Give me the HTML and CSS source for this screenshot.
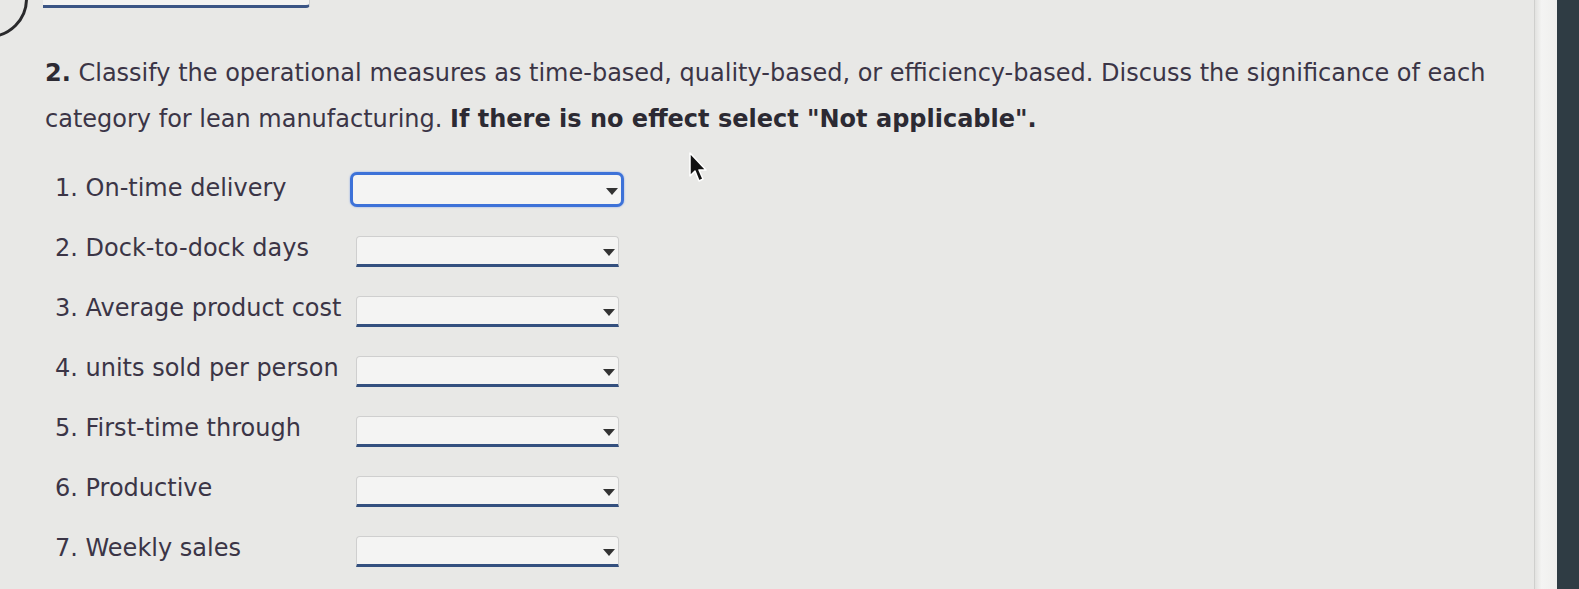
FILE: index.html
```html
<!DOCTYPE html>
<html>
<head>
<meta charset="utf-8">
<link rel="stylesheet" href="styles.css">
</head>
<body>
<div class="screen">
  <div class="page">
    <div class="topbar">
      <div class="ring"></div>
      <div class="prev-select"></div>
    </div>
    <p class="question"><b>2.</b> Classify the operational measures as time-based, quality-based, or efficiency-based. Discuss the significance of each category for lean manufacturing. <b>If there is no effect select "Not applicable".</b></p>
    <ol class="items">
      <li><span class="label">1. On-time delivery</span><span class="select focused"><span class="arrow"></span></span></li>
      <li><span class="label">2. Dock-to-dock days</span><span class="select"><span class="arrow"></span></span></li>
      <li><span class="label">3. Average product cost</span><span class="select"><span class="arrow"></span></span></li>
      <li><span class="label">4. units sold per person</span><span class="select"><span class="arrow"></span></span></li>
      <li><span class="label">5. First-time through</span><span class="select"><span class="arrow"></span></span></li>
      <li><span class="label">6. Productive</span><span class="select"><span class="arrow"></span></span></li>
      <li><span class="label">7. Weekly sales</span><span class="select"><span class="arrow"></span></span></li>
    </ol>
    <svg class="cursor" width="22" height="32" viewBox="0 0 22 32"><path d="M2 1 L2 24 L7 19 L11 29 L15 27 L11 18 L18 18 Z" fill="#111" stroke="#fff" stroke-width="1.5" stroke-linejoin="round"/></svg>
  </div>
  <div class="bezel"></div>
  <div class="frame"></div>
</div>
</body>
</html>
```
FILE: styles.css
```css
html, body {
  margin: 0;
  padding: 0;
}
body {
  width: 1579px;
  height: 589px;
  overflow: hidden;
  background: #e7e7e5;
  font-family: "DejaVu Sans", Verdana, sans-serif;
  color: #3b3546;
}
.screen {
  display: flex;
  height: 589px;
}
.page {
  position: relative;
  flex: 0 0 1534px;
  background: #e8e8e6;
  border-right: 1px solid #cfcfcd;
  overflow: hidden;
}
.bezel {
  flex: 0 0 22px;
  background: linear-gradient(90deg, #e2e2e0 0, #f4f4f3 30%, #efefed 100%);
}
.frame {
  flex: 1;
  background: #2f3c44;
}
.topbar {
  display: flex;
  align-items: flex-start;
  height: 10px;
}
.ring {
  width: 72px;
  height: 72px;
  margin: -40px 0 0 -50px;
  border: 3px solid #2a2a2c;
  border-radius: 50%;
  flex: none;
}
.prev-select {
  width: 266px;
  height: 5px;
  margin-left: 15px;
  background: #f3f3f2;
  border-bottom: 3px solid #3b5585;
  border-right: 1px solid #cfcfcf;
  border-radius: 0 0 4px 0;
}
.question {
  margin: 40px 0 0 45px;
  font-size: 24px;
  line-height: 46px;
  width: 1485px;
}
.question b {
  color: #2c2a33;
}
.items {
  list-style: none;
  margin: 16px 0 0 55px;
  padding: 0;
  font-size: 24px;
}
.items li {
  display: flex;
  align-items: center;
  height: 60px;
}
.label {
  width: 301px;
  flex: none;
}
.select {
  position: relative;
  box-sizing: border-box;
  width: 263px;
  height: 31px;
  margin-top: 7px;
  background: #f4f4f3;
  border: 1px solid #cfcfcf;
  border-bottom: 3px solid #34507f;
  border-radius: 4px 4px 0 0;
}
.select.focused {
  width: 274px;
  height: 35px;
  margin-top: 3px;
  margin-left: -6px;
  border: 3px solid #3d72d8;
  border-radius: 7px;
  box-shadow: 0 0 2px #7ea0e6;
}
.arrow {
  position: absolute;
  right: 3px;
  top: 50%;
  margin-top: -2px;
  width: 0;
  height: 0;
  border-left: 6px solid transparent;
  border-right: 6px solid transparent;
  border-top: 7px solid #333;
}
.cursor {
  position: absolute;
  left: 688px;
  top: 152px;
}
```
